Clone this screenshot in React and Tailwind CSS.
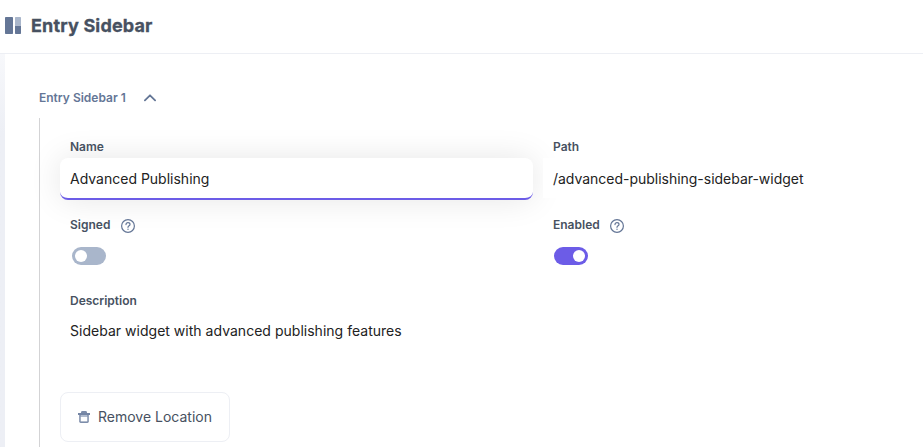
const labelClass = "text-[12px] leading-[16px] font-semibold text-[#475161]";

function HelpIcon() {
  return (
    <svg className="mt-[2px] h-[14px] w-[14px] shrink-0" viewBox="0 0 14 14" fill="none" stroke="#647696" strokeWidth="1.2">
      <circle cx="7" cy="7" r="6.4" />
      <path d="M5 5.6C5 4.2 5.9 3.6 7 3.6s2 .7 2 1.8C9 6.7 7 6.8 7 8.3" strokeLinecap="round" />
      <circle cx="7" cy="10.2" r=".7" fill="#647696" stroke="none" />
    </svg>
  );
}

function Toggle({ on }) {
  return (
    <div className={on ? "flex h-[18px] w-[34px] items-center justify-end rounded-full bg-[#6c5ce7] px-[3px]" : "flex h-[18px] w-[34px] items-center rounded-full bg-[#a9b6cb] px-[3px]"}>
      <span className="h-3 w-3 rounded-full bg-white" />
    </div>
  );
}

export default function App() {
  return (
    <div className="flex h-[447px] w-full flex-col overflow-hidden bg-white font-['Inter',sans-serif]">
      <header className="flex h-[54px] shrink-0 items-center border-b border-[#edeff4] pb-[2px] pl-[5px]">
        <svg className="h-[17px] w-[16px]" viewBox="0 0 16 17">
          <rect width="8" height="17" rx=".7" fill="#647696" />
          <path d="M10 8.5h6v7.8a.7.7 0 0 1-.7.7h-4.6a.7.7 0 0 1-.7-.7z" fill="#647696" />
          <path d="M10 8.5h6V.7a.7.7 0 0 0-.7-.7h-4.6a.7.7 0 0 0-.7.7z" fill="#a9b6cb" />
        </svg>
        <h1 className="ml-[10px] text-[18px] leading-6 font-bold tracking-[0.16px] text-[#475161] [-webkit-text-stroke:0.3px_#475161]">Entry Sidebar</h1>
      </header>

      <main className="flex min-h-0 flex-1">
        <div className="w-[5px] shrink-0 bg-linear-to-b from-[#f7f8fb] to-[#edeff5] to-[80px]" />
        <div className="flex flex-1 flex-col pl-[34px]">
          <div className="mt-9 flex h-4 items-center text-[#647696]">
            <span className="text-[12px] leading-4 font-semibold">Entry Sidebar 1</span>
            <svg className="ml-[18px] h-2 w-3" viewBox="0 0 12 8" fill="none" stroke="#647696" strokeWidth="1.8" strokeLinecap="round" strokeLinejoin="round">
              <path d="M.9 6.3 6 1.3l5.1 5" />
            </svg>
          </div>

          <section className="mt-3 flex flex-1 flex-col border-l border-[#d3d3d5] pl-5">
            <div className="flex h-[82px]">
              <div className="w-[473px]">
                <div className={"mt-[21px] ml-[10px] " + labelClass}>Name</div>
                <div className="mt-[3px] flex h-[42px] items-center rounded-lg border-b-2 border-[#6c5ce7] bg-white px-[10px] text-[14px] text-[#222] shadow-[0_0_32px_rgba(0,0,0,0.10)]">
                  <span className="pt-px">Advanced Publishing</span>
                </div>
              </div>
              <div className="relative ml-[10px]">
                <div className={"mt-[21px] ml-[10px] " + labelClass}>Path</div>
                <div className="mt-[3px] flex h-10 items-center bg-white px-[10px] pt-px text-[14px] tracking-[-0.02px] text-[#222]">/advanced-publishing-sidebar-widget</div>
              </div>
            </div>

            <div className="mt-[17px] flex h-[49px]">
              <div className="ml-[10px] w-[483px]">
                <div className="flex items-start gap-[11px]">
                  <span className={labelClass}>Signed</span>
                  <HelpIcon />
                </div>
                <div className="mt-[14px] ml-[2px]"><Toggle /></div>
              </div>
              <div>
                <div className="flex items-start gap-[10px]">
                  <span className={labelClass}>Enabled</span>
                  <HelpIcon />
                </div>
                <div className="mt-[14px] ml-px"><Toggle on /></div>
              </div>
            </div>

            <div className="mt-[27px] ml-[10px]">
              <div className={labelClass}>Description</div>
              <div className="mt-[12px] text-[14px] leading-[20px] tracking-[0.02px] text-[#222]">Sidebar widget with advanced publishing features</div>
            </div>

            <button className="mt-[51px] flex h-[50px] w-[170px] shrink-0 items-center rounded-lg border border-[#edeff4] bg-white pl-[17px] text-[14px] text-[#475161]">
              <svg className="h-3 w-3" viewBox="0 0 12 12">
                <path d="M3 2V1.4Q3 0 4.4 0h3.2Q9 0 9 1.4V2z" fill="#7c8ca9" />
                <path d="M0 2h12v2H0z" fill="#7485a4" />
                <path d="M1.2 4h9.6v6.6q0 1.4-1.4 1.4H2.6q-1.4 0-1.4-1.4z" fill="#7d8daa" />
                <path d="M2.7 5.6h6.6v4.8H2.7z" fill="white" />
                <path d="M2.7 4h6.6v1.6H2.7z" fill="#b1bccf" />
              </svg>
              <span className="ml-2 pb-[2px]">Remove Location</span>
            </button>
          </section>
        </div>
      </main>
    </div>
  );
}
